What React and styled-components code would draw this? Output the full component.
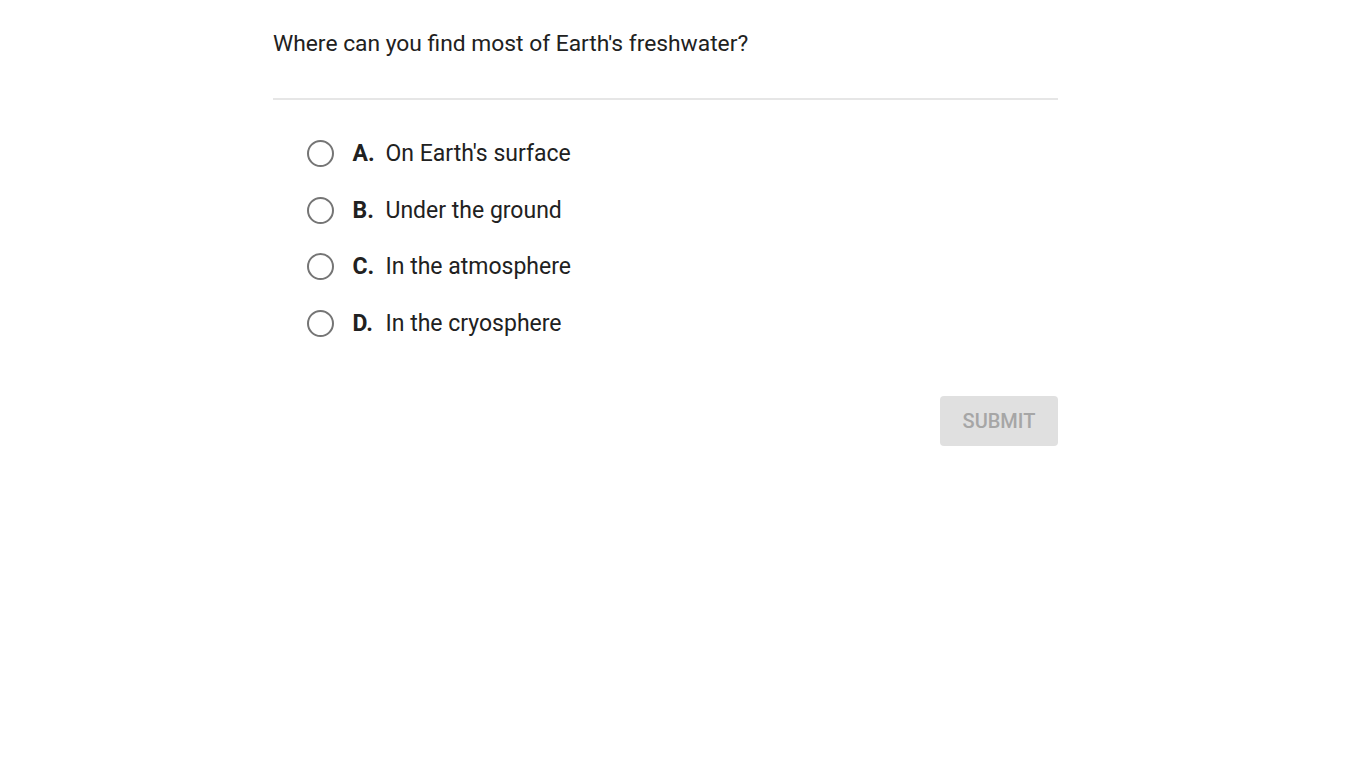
import styled, { createGlobalStyle } from "styled-components";

const GlobalStyle = createGlobalStyle`
  body {
    margin: 0;
    background: #ffffff;
    font-family: Roboto, "Liberation Sans", sans-serif;
    color: #212121;
  }
`;

const options = [
  { letter: "A.", text: "On Earth's surface" },
  { letter: "B.", text: "Under the ground" },
  { letter: "C.", text: "In the atmosphere" },
  { letter: "D.", text: "In the cryosphere" },
];

function App() {
  return (
    <>
      <GlobalStyle />
      <Page>
        <Question>Where can you find most of Earth's freshwater?</Question>
        <Options>
          {options.map((o) => (
            <Option key={o.letter}>
              <Radio />
              <Letter>{o.letter}</Letter>
              <Answer>{o.text}</Answer>
            </Option>
          ))}
        </Options>
        <Footer>
          <Submit disabled>SUBMIT</Submit>
        </Footer>
      </Page>
    </>
  );
}

const Page = styled.div`
  width: 785px;
  margin-left: 273px;
  padding-top: 28px;
`;

const Question = styled.div`
  font-size: 22.8px;
  line-height: 32px;
  padding-bottom: 38px;
  border-bottom: 2px solid #e6e6e6;
`;

const Options = styled.div`
  display: flex;
  flex-direction: column;
  gap: 20px;
  padding: 35px 0 0 34px;
`;

const Option = styled.label`
  display: flex;
  align-items: center;
  height: 36.7px;
  cursor: pointer;
`;

const Radio = styled.span`
  width: 23px;
  height: 23px;
  border: 2.7px solid #757575;
  border-radius: 50%;
  flex-shrink: 0;
  margin-right: 18.5px;
`;

const Letter = styled.span`
  font-weight: 700;
  font-size: 23px;
  width: 33px;
  flex-shrink: 0;
`;

const Answer = styled.span`
  font-size: 23px;
`;

const Footer = styled.div`
  display: flex;
  justify-content: flex-end;
  padding-top: 54px;
`;

const Submit = styled.button`
  width: 118px;
  height: 50px;
  border: none;
  border-radius: 4px;
  background: #e0e0e0;
  color: #a6a6a6;
  font-family: Roboto, "Liberation Sans", sans-serif;
  font-weight: 500;
  font-size: 20px;
`;

export default App;
